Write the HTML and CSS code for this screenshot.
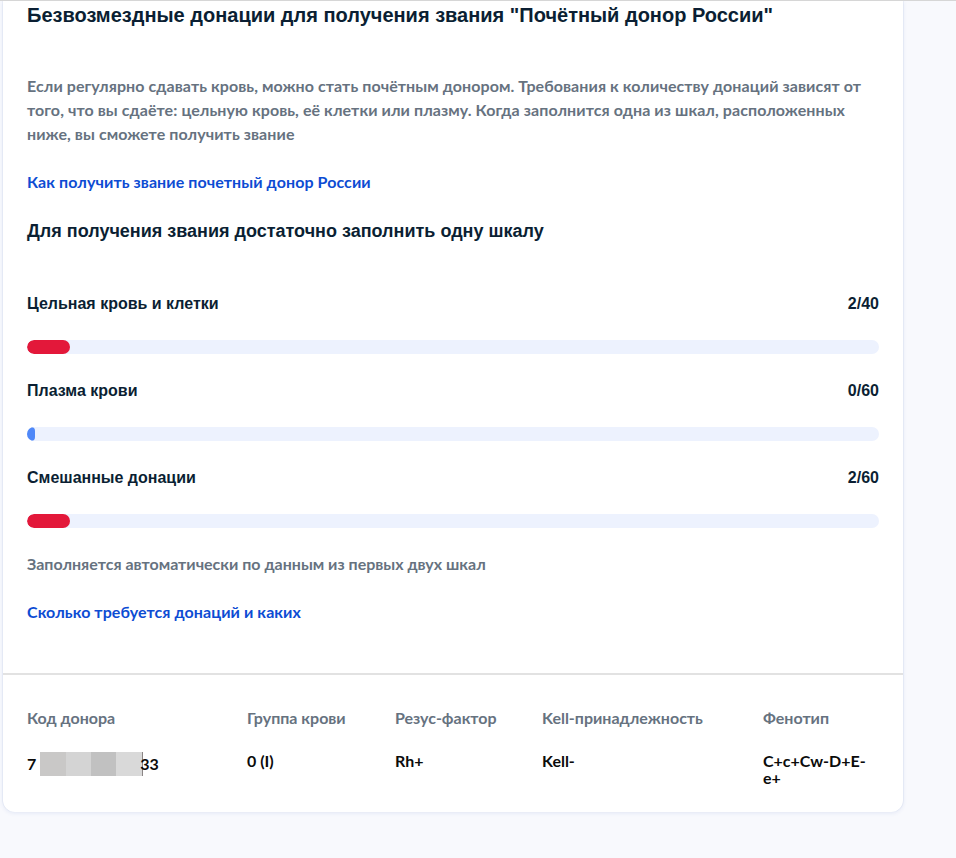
FILE: index.html
```html
<!DOCTYPE html>
<html lang="ru">
<head>
<meta charset="utf-8">
<link rel="stylesheet" href="styles.css">
</head>
<body>
<div class="card">
  <div class="main">
    <h1 class="title">Безвозмездные донации для получения звания "Почётный донор России"</h1>
    <p class="lead">Если регулярно сдавать кровь, можно стать почётным донором. Требования к количеству донаций зависят от того, что вы сдаёте: цельную кровь, её клетки или плазму. Когда заполнится одна из шкал, расположенных ниже, вы сможете получить звание</p>
    <a class="link link-first" href="#">Как получить звание почетный донор России</a>
    <h2 class="subtitle">Для получения звания достаточно заполнить одну шкалу</h2>
    <div class="scales">
      <div class="scale">
        <div class="scale-head"><span>Цельная кровь и клетки</span><span>2/40</span></div>
        <div class="track"><div class="fill fill-red" style="width:5%"></div></div>
      </div>
      <div class="scale">
        <div class="scale-head"><span>Плазма крови</span><span>0/60</span></div>
        <div class="track"><div class="fill fill-blue" style="width:8px"></div></div>
      </div>
      <div class="scale">
        <div class="scale-head"><span>Смешанные донации</span><span>2/60</span></div>
        <div class="track"><div class="fill fill-red" style="width:5%"></div></div>
      </div>
    </div>
    <p class="note">Заполняется автоматически по данным из первых двух шкал</p>
    <a class="link link-second" href="#">Сколько требуется донаций и каких</a>
  </div>
  <div class="info">
    <div class="col col-code">
      <div class="label">Код донора</div>
      <div class="value">7<span class="blur"><i class="b1"></i><i class="b2"></i><i class="b3"></i><i class="b4"></i></span>33</div>
    </div>
    <div class="col col-group">
      <div class="label">Группа крови</div>
      <div class="value">0 (I)</div>
    </div>
    <div class="col col-rh">
      <div class="label">Резус-фактор</div>
      <div class="value">Rh+</div>
    </div>
    <div class="col col-kell">
      <div class="label">Kell-принадлежность</div>
      <div class="value">Kell-</div>
    </div>
    <div class="col col-pheno">
      <div class="label">Фенотип</div>
      <div class="value pheno">C+c+Cw-D+E-<br>e+</div>
    </div>
  </div>
</div>
</body>
</html>
```
FILE: styles.css
```css
html, body {
  margin: 0;
  padding: 0;
}
body {
  background: #f8f9fd;
  border-top: 1px solid #d6d6d6;
  min-height: 857px;
  font-family: "Lato", "Liberation Sans", sans-serif;
}
.card {
  margin-left: 3px;
  width: 900px;
  background: #fff;
  border-radius: 0 0 12px 12px;
  box-shadow: 0 1px 4px rgba(60, 90, 180, 0.12), -1px 0 0 #eef1f8, 1px 0 0 #eef1f8;
}
.main {
  padding: 2px 24px 49px 24px;
  border-bottom: 2px solid #e2e2e2;
}
.title {
  margin: 0;
  font-family: "Liberation Sans", Arial, sans-serif;
  font-weight: 700;
  font-size: 20px;
  line-height: 24px;
  color: #0b1f33;
}
.lead {
  margin: 47px 0 0 0;
  font-size: 16px;
  line-height: 24px;
  font-weight: 700;
  letter-spacing: 0.08px;
  color: #66727f;
}
.link {
  display: block;
  font-size: 16px;
  line-height: 24px;
  font-weight: 700;
  letter-spacing: 0.08px;
  color: #0d4cd3;
  text-decoration: none;
}
.link-first {
  margin-top: 24px;
}
.subtitle {
  margin: 25px 0 0 0;
  font-family: "Liberation Sans", Arial, sans-serif;
  font-weight: 700;
  font-size: 18px;
  line-height: 24px;
  color: #0b1f33;
}
.scales {
  margin-top: 49px;
  display: flex;
  flex-direction: column;
  gap: 25px;
}
.scale-head {
  display: flex;
  justify-content: space-between;
  font-family: "Liberation Sans", Arial, sans-serif;
  font-weight: 700;
  font-size: 16px;
  line-height: 24px;
  color: #0b1f33;
}
.track {
  margin-top: 24px;
  height: 14px;
  border-radius: 8px;
  background: #edf2fe;
  overflow: hidden;
}
.fill {
  height: 100%;
  border-radius: 8px;
}
.fill-red {
  background: #e3183a;
}
.fill-blue {
  background: #4f88f8;
}
.note {
  margin: 24px 0 0 0;
  font-size: 16px;
  line-height: 24px;
  font-weight: 700;
  color: #66727f;
}
.link-second {
  margin-top: 24px;
}
.info {
  display: grid;
  grid-template-columns: 220px 148px 147px 221px 1fr;
  padding: 31px 24px 26px 24px;
}
.label {
  font-size: 16px;
  line-height: 24px;
  font-weight: 700;
  color: #66727f;
}
.value {
  margin-top: 22px;
  font-size: 16px;
  line-height: 17px;
  font-weight: 700;
  color: #0b0b0b;
}
.pheno {
  width: 110px;
}
.blur {
  display: inline-flex;
  vertical-align: -6px;
  height: 24px;
  margin-left: 4px;
  margin-right: -3px;
  border-right: 1px solid #8b8686;
}
.blur i {
  display: block;
  height: 24px;
}
.b1 { width: 26px; background: #c9c8c7; }
.b2 { width: 25px; background: #d4d4d4; }
.b3 { width: 25px; background: #c1c1c1; }
.b4 { width: 26px; background: #d9d9d9; }
```
